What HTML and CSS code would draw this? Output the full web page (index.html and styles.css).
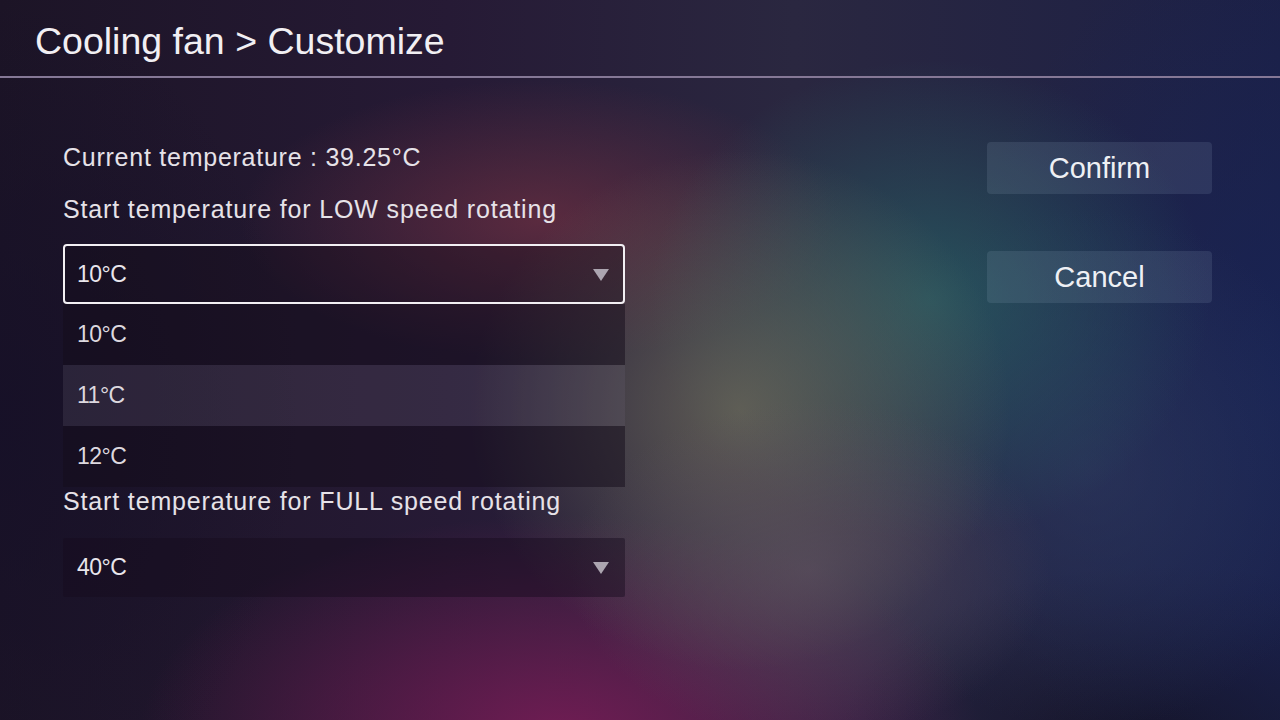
FILE: index.html
```html
<!DOCTYPE html>
<html lang="en">
<head>
<meta charset="utf-8">
<title>Cooling fan &gt; Customize</title>
<link rel="stylesheet" href="styles.css">
</head>
<body>
<div class="screen">
  <header class="header">
    <h1 class="title">Cooling fan &gt; Customize</h1>
  </header>
  <main class="content">
    <section class="form">
      <p class="label current">Current temperature : 39.25°C</p>
      <p class="label">Start temperature for LOW speed rotating</p>
      <div class="select-wrap">
        <div class="select focused">
          <span class="value">10°C</span>
          <span class="arrow"></span>
        </div>
        <ul class="options">
          <li class="option">10°C</li>
          <li class="option active">11°C</li>
          <li class="option">12°C</li>
        </ul>
      </div>
      <p class="label full">Start temperature for FULL speed rotating</p>
      <div class="select plain">
        <span class="value">40°C</span>
        <span class="arrow"></span>
      </div>
    </section>
    <aside class="actions">
      <button class="btn">Confirm</button>
      <button class="btn">Cancel</button>
    </aside>
  </main>
</div>
</body>
</html>
```

FILE: styles.css
```css
* { box-sizing: border-box; }
html, body { margin: 0; padding: 0; }
body {
  width: 1280px;
  height: 720px;
  overflow: hidden;
  font-family: "Liberation Sans", Arial, sans-serif;
  color: #e9e6ec;
}
.screen {
  width: 1280px;
  height: 720px;
  background:
    radial-gradient(ellipse 240px 170px at 810px 570px, rgba(100,85,100,0.6), rgba(100,85,100,0)),
    radial-gradient(ellipse 270px 260px at 740px 410px, rgba(112,110,92,0.75), rgba(112,110,92,0)),
    radial-gradient(ellipse 280px 240px at 930px 300px, rgba(40,98,102,0.75), rgba(40,98,102,0)),
    radial-gradient(ellipse 260px 260px at 1090px 470px, rgba(50,64,100,0.5), rgba(50,64,100,0)),
    radial-gradient(ellipse 300px 140px at 540px 220px, rgba(112,48,66,0.7), rgba(112,48,66,0)),
    radial-gradient(ellipse 420px 220px at 560px 735px, rgba(125,28,88,0.85), rgba(125,28,88,0)),
    radial-gradient(ellipse 340px 460px at 1290px 380px, rgba(24,36,86,0.85), rgba(24,36,86,0)),
    radial-gradient(ellipse 320px 170px at 1160px 735px, rgba(20,18,36,0.9), rgba(20,18,36,0)),
    radial-gradient(ellipse 300px 420px at 0px 420px, rgba(22,16,40,0.85), rgba(22,16,40,0)),
    linear-gradient(90deg, #1c1426 0%, #261a35 35%, #2a2740 62%, #1c2046 100%);
}
.header {
  height: 78px;
  border-bottom: 2px solid #857896;
  padding-left: 35px;
  padding-top: 6px;
  display: flex;
  align-items: center;
}
.title {
  margin: 0;
  font-size: 37.5px;
  font-weight: normal;
  color: #f1eff3;
}
.content {
  display: flex;
  justify-content: space-between;
  padding: 64px 68px 0 63px;
}
.form {
  width: 562px;
  display: flex;
  flex-direction: column;
}
.label {
  margin: 0;
  font-size: 25px;
  line-height: 30px;
  letter-spacing: 0.85px;
  color: #e6e2e8;
}
.current { margin-bottom: 22px; letter-spacing: 0.75px; }
.select-wrap {
  position: relative;
  margin-top: 20px;
}
.select {
  height: 60px;
  display: flex;
  align-items: center;
  justify-content: space-between;
  padding: 0 16px 0 14px;
  font-size: 23px;
}
.select.focused {
  border: 2px solid #f2eff3;
  border-radius: 4px;
  background: rgba(20,12,24,0.35);
  padding-left: 12px;
  padding-right: 14px;
}
.select.plain {
  margin-top: 22px;
  background: rgba(22,12,28,0.45);
  height: 59px;
  border-radius: 2px;
}
.value { color: #e9e6ec; letter-spacing: -0.5px; }
.arrow {
  width: 0;
  height: 0;
  border-left: 8px solid transparent;
  border-right: 8px solid transparent;
  border-top: 12px solid #aca5b0;
  margin-top: 1px;
}
.options {
  position: absolute;
  left: 0;
  right: 0;
  top: 60px;
  margin: 0;
  padding: 0;
  list-style: none;
}
.option {
  height: 61px;
  display: flex;
  align-items: center;
  padding-left: 14px;
  font-size: 23px;
  letter-spacing: -0.5px;
  color: #ddd8df;
  background: rgba(20,12,26,0.5);
}
.option.active {
  background: rgba(110,100,120,0.22);
}
.full { margin-top: 182px; }
.actions {
  width: 225px;
  display: flex;
  flex-direction: column;
  gap: 57px;
}
.btn {
  height: 52px;
  width: 225px;
  border: none;
  border-radius: 4px;
  background: rgba(170,190,215,0.13);
  color: #eef0f4;
  font-family: "Liberation Sans", Arial, sans-serif;
  font-size: 29px;
}
```
